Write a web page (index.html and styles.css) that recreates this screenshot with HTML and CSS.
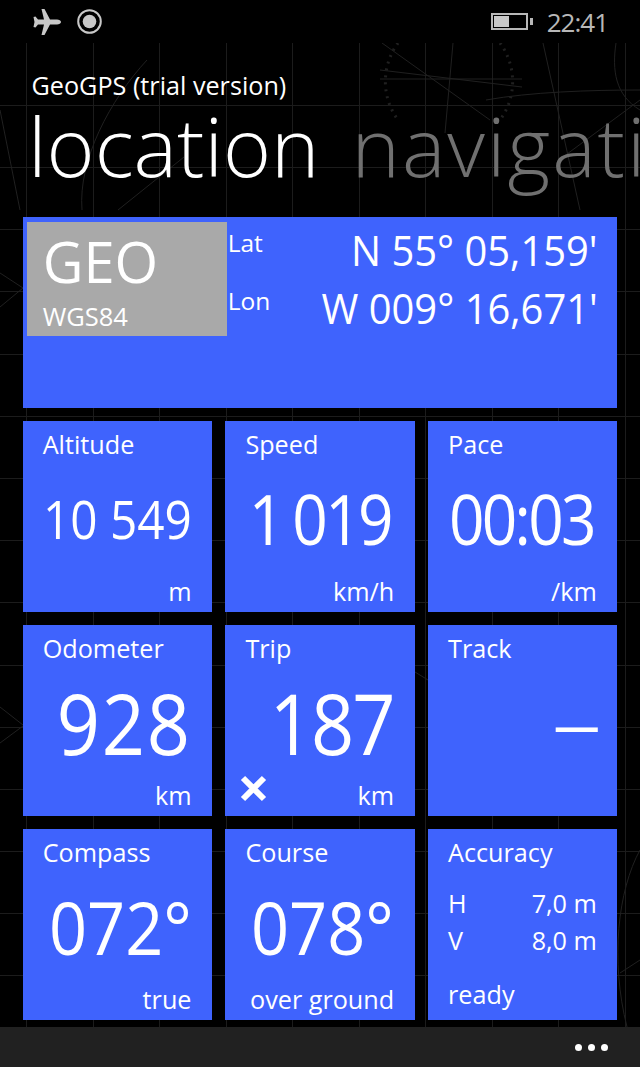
FILE: index.html
```html
<!doctype html>
<html>

<head>
    <meta charset="utf8">
    <title>GeoGPS</title>
    <link rel="stylesheet" href="styles.css">
</head>

<body>
    <svg class="map" width="640" height="1067" viewBox="0 0 640 1067">
        <g fill="none" stroke="#202020">
            <path d="M398 43A65 65 0 0 0 398 120M500 43A65 65 0 0 1 500 120" stroke-dasharray="2 5" stroke-width="3"/>
            <path d="M382 43L490 120M380 70L522 87M380 79H522M453 43L445 133M486 100C530 92 590 90 640 90M543 43L580 210M616 43C612 70 615 95 640 110M640 100L563 157"/>
            <path d="M147 60C110 100 78 160 82 210M0 110L20 210M118 210L184 157M0 307L23 288M0 273L23 288"/>
            <path d="M0 707L23 725M0 743L23 726M415 672L428 680M640 850C618 890 610 960 627 1027M620 973L640 960"/>
        </g>
    </svg>

    <header class="status">
        <div class="status-left">
            <svg class="plane" width="28" height="26" viewBox="0 0 28 26">
                <path fill="#c8c8c8" d="M28 13c0-1.500-2-2.500-4-2.500h-7L11.500 0h-3L11 10.500H5L2.500 7.500l-2 .5L1.500 13l-1 5 2 .5L5 15.500h6L8.500 26h3L17 15.500h7c2 0 4-1 4-2.500z"/>
            </svg>
            <svg class="gps" width="25" height="25" viewBox="0 0 25 25">
                <circle cx="12.500" cy="12.500" r="11.300" fill="none" stroke="#c8c8c8" stroke-width="2"/>
                <circle cx="12.500" cy="12.500" r="6.800" fill="#c8c8c8"/>
            </svg>
        </div>
        <div class="status-right">
            <div class="battery"><div class="battery-level"></div></div>
            <div class="battery-tip"></div>
            <div class="clock">22:41</div>
        </div>
    </header>

    <div class="app-title">GeoGPS (trial version)</div>
    <div class="pivot">
        <span class="pivot-item">location</span>
        <span class="pivot-item off">navigation</span>
    </div>

    <section class="tiles">
        <div class="tile wide">
            <div class="datum">
                <div class="datum-name">GEO</div>
                <div class="datum-sub">WGS84</div>
            </div>
            <div class="coords">
                <div class="coord">
                    <span class="coord-label">Lat</span>
                    <span class="coord-value">N 55° 05,159'</span>
                </div>
                <div class="coord">
                    <span class="coord-label">Lon</span>
                    <span class="coord-value">W 009° 16,671'</span>
                </div>
            </div>
        </div>

        <div class="tile">
            <div class="label">Altitude</div>
            <div class="value small">10 549</div>
            <div class="unit">m</div>
        </div>
        <div class="tile">
            <div class="label">Speed</div>
            <div class="value tight">1 019</div>
            <div class="unit">km/h</div>
        </div>
        <div class="tile">
            <div class="label">Pace</div>
            <div class="value tight">00:03</div>
            <div class="unit">/km</div>
        </div>

        <div class="tile">
            <div class="label">Odometer</div>
            <div class="value big">928</div>
            <div class="unit">km</div>
        </div>
        <div class="tile">
            <div class="label">Trip</div>
            <div class="value big tight">187</div>
            <div class="unit">km</div>
            <svg class="reset" width="27" height="27" viewBox="0 0 27 27">
                <path d="M3 3L24 24M24 3L3 24" stroke="#fff" stroke-width="6" fill="none"/>
            </svg>
        </div>
        <div class="tile">
            <div class="label">Track</div>
            <div class="value dash">–</div>
            <div class="unit">&nbsp;</div>
        </div>

        <div class="tile">
            <div class="label">Compass</div>
            <div class="value mid">072°</div>
            <div class="unit">true</div>
        </div>
        <div class="tile">
            <div class="label">Course</div>
            <div class="value mid">078°</div>
            <div class="unit">over ground</div>
        </div>
        <div class="tile">
            <div class="label">Accuracy</div>
            <div class="acc">
                <div class="acc-row"><span>H</span><span>7,0 m</span></div>
                <div class="acc-row"><span>V</span><span>8,0 m</span></div>
            </div>
            <div class="ready">ready</div>
        </div>
    </section>

    <footer class="appbar">
        <i class="dot"></i><i class="dot"></i><i class="dot"></i>
    </footer>
</body>

</html>
```

FILE: styles.css
```css
* {
    box-sizing: border-box;
}

html,
body {
    margin: 0;
    padding: 0;
}

body {
    position: relative;
    width: 640px;
    height: 1067px;
    overflow: hidden;
    color: #fff;
    font-family: "Open Sans", "Noto Sans", sans-serif;
    background-color: #000;
    background-image:
        repeating-linear-gradient(90deg, transparent 0, transparent 26.500px, #1c1c1c 26.500px, #1c1c1c 27.500px, transparent 27.500px, transparent 66.500px),
        repeating-linear-gradient(180deg, transparent 0, transparent 42.500px, #1c1c1c 42.500px, #1c1c1c 43.500px, transparent 43.500px, transparent 62.200px);
}

.map {
    position: absolute;
    left: 0;
    top: 0;
}

.status {
    position: relative;
    height: 43px;
    background: #000;
    display: flex;
    justify-content: space-between;
    align-items: center;
    padding: 0 32px 0 33px;
    color: #b8b8b8;
}

.status-left {
    display: flex;
    align-items: center;
    gap: 16px;
}

.status-right {
    display: flex;
    align-items: center;
}

.battery {
    width: 37px;
    height: 17px;
    border: 2px solid #b8b8b8;
    padding: 1px;
}

.battery-level {
    width: 15px;
    height: 100%;
    background: #c8c8c8;
}

.battery-tip {
    width: 3px;
    height: 7px;
    margin-left: 2px;
    background: #b8b8b8;
}

.clock {
    margin-left: 14px;
    font-size: 26px;
    letter-spacing: -1px;
}

.app-title {
    position: relative;
    margin: 25px 0 1px 31.500px;
    font-size: 25.200px;
    line-height: 34px;
}

.pivot {
    position: relative;
    display: flex;
    gap: 32px;
    margin: 0 0 0 28px;
    height: 84px;
    font-size: 82px;
    line-height: 84px;
    font-weight: 300;
    white-space: nowrap;
}

.pivot-item.off {
    color: #707070;
    letter-spacing: 2px;
}

.tiles {
    position: relative;
    display: grid;
    grid-template-columns: repeat(3, 189.300px);
    grid-auto-rows: 190.500px;
    column-gap: 13.400px;
    row-gap: 13.500px;
    margin: 30.300px 0 0 22.700px;
}

.tile {
    position: relative;
    display: flex;
    flex-direction: column;
    padding: 6px 20.500px 4px 20px;
    background: #3f63fd;
}

.wide {
    grid-column: 1 / 4;
    flex-direction: row;
    padding: 4.500px 20px 0 4px;
}

.datum {
    width: 200px;
    height: 114px;
    padding: 0 0 0 16px;
    background: #a9a9a9;
}

.datum-name {
    font-size: 56px;
    line-height: 78px;
}

.datum-sub {
    margin-top: 1px;
    font-size: 25.500px;
    line-height: 30px;
    font-weight: 500;
}

.coords {
    flex: 1;
    padding-left: 1px;
}

.coord {
    display: flex;
    justify-content: space-between;
    height: 58px;
}

.coord-label {
    font-size: 24.500px;
    font-weight: 500;
    line-height: 42px;
}

.coord-value {
    font-size: 42px;
    line-height: 56px;
    transform: scaleX(0.95);
    transform-origin: right center;
}

.label {
    font-size: 25.200px;
    line-height: 34px;
}

/* the original face has narrower digits than anything installed */
.value {
    flex: 1;
    display: flex;
    justify-content: flex-end;
    align-items: center;
    padding-top: 2px;
    font-size: 69px;
    line-height: 1;
    white-space: nowrap;
    transform: scaleX(0.9);
    transform-origin: right center;
}

.value.small {
    font-size: 53px;
}

.value.mid {
    font-size: 74px;
}

.value.big {
    font-size: 84px;
    letter-spacing: 2px;
}

.value.tight {
    margin-right: 3px;
    letter-spacing: -3px;
    word-spacing: -3px;
}

.value.big.tight {
    margin-right: 0;
    letter-spacing: -2px;
}

.value.dash {
    margin-right: -5px;
    padding: 0 0 8px;
    font-size: 100px;
    font-weight: 300;
    transform: none;
}

.unit {
    text-align: right;
    font-size: 25.200px;
    line-height: 34px;
    white-space: nowrap;
}

.reset {
    position: absolute;
    left: 15px;
    bottom: 14px;
}

.acc {
    flex: 1;
    padding-top: 16px;
}

.acc-row {
    display: flex;
    justify-content: space-between;
    font-size: 25.200px;
    line-height: 37px;
}

.ready {
    font-size: 25.200px;
    line-height: 34px;
    padding-bottom: 5px;
}

.appbar {
    position: absolute;
    left: 0;
    right: 0;
    bottom: 0;
    height: 40px;
    background: #212121;
    display: flex;
    justify-content: flex-end;
    align-items: center;
    gap: 6px;
    padding: 0 32px 0 0;
}

.dot {
    width: 7px;
    height: 7px;
    border-radius: 50%;
    background: #fff;
}
```
